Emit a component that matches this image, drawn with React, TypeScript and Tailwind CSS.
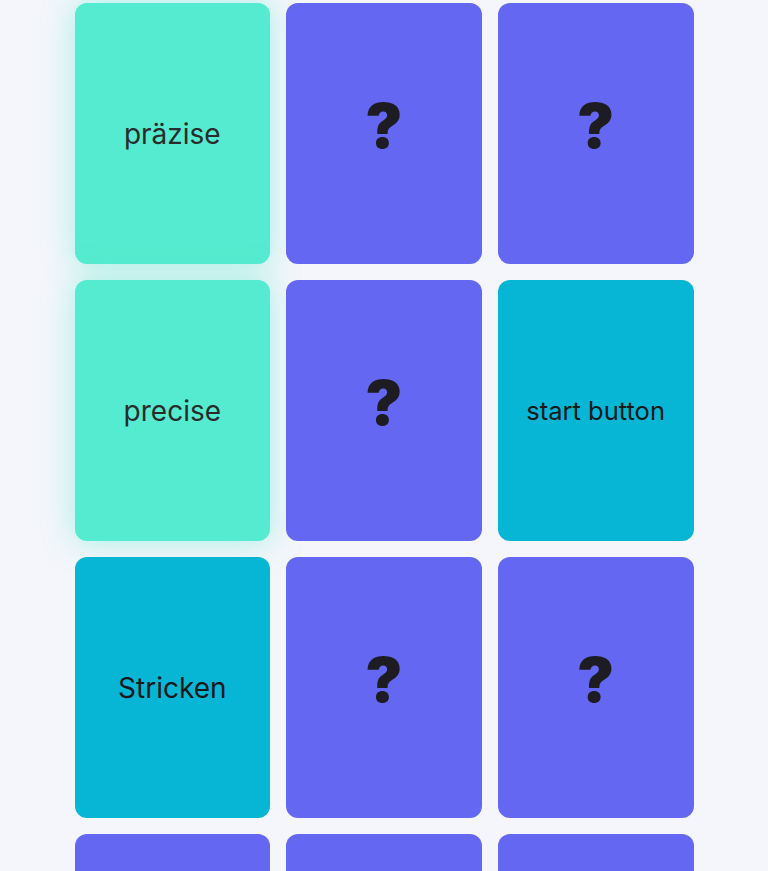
type Card = { face: 'hidden' | 'matched' | 'open'; text?: string; size?: string }

const cards: Card[] = [
  { face: 'matched', text: 'präzise', size: 'text-[28px]' },
  { face: 'hidden' },
  { face: 'hidden' },
  { face: 'matched', text: 'precise', size: 'text-[28px]' },
  { face: 'hidden' },
  { face: 'open', text: 'start button', size: 'text-[25.5px]' },
  { face: 'open', text: 'Stricken', size: 'text-[28px]' },
  { face: 'hidden' },
  { face: 'hidden' },
  { face: 'hidden' },
  { face: 'hidden' },
  { face: 'hidden' },
]

function MemoryCard({ card }: { card: Card }) {
  if (card.face === 'hidden') {
    return (
      <div className="h-[261px] rounded-xl bg-[#6467f2] flex items-center justify-center">
        <span className="text-[62px] font-black text-[#1c1c22] leading-none -mt-4">?</span>
      </div>
    )
  }
  const matched = card.face === 'matched'
  return (
    <div
      className={`h-[261px] rounded-xl flex items-center justify-center ${
        matched ? 'bg-[#55ebd0] text-[#2b2b2b] shadow-[0_0_30px_rgba(85,235,208,0.5)]' : 'bg-[#07b6d5] text-[#18181b]'
      }`}
    >
      <span className={`${card.size} leading-none`}>{card.text}</span>
    </div>
  )
}

export default function App() {
  return (
    <div className="min-h-screen bg-[#f4f6fb] font-['Inter',sans-serif]">
      <div className="mx-auto w-[619px] pt-[3px] grid grid-cols-3 gap-4">
        {cards.map((c, i) => (
          <MemoryCard key={i} card={c} />
        ))}
      </div>
    </div>
  )
}
